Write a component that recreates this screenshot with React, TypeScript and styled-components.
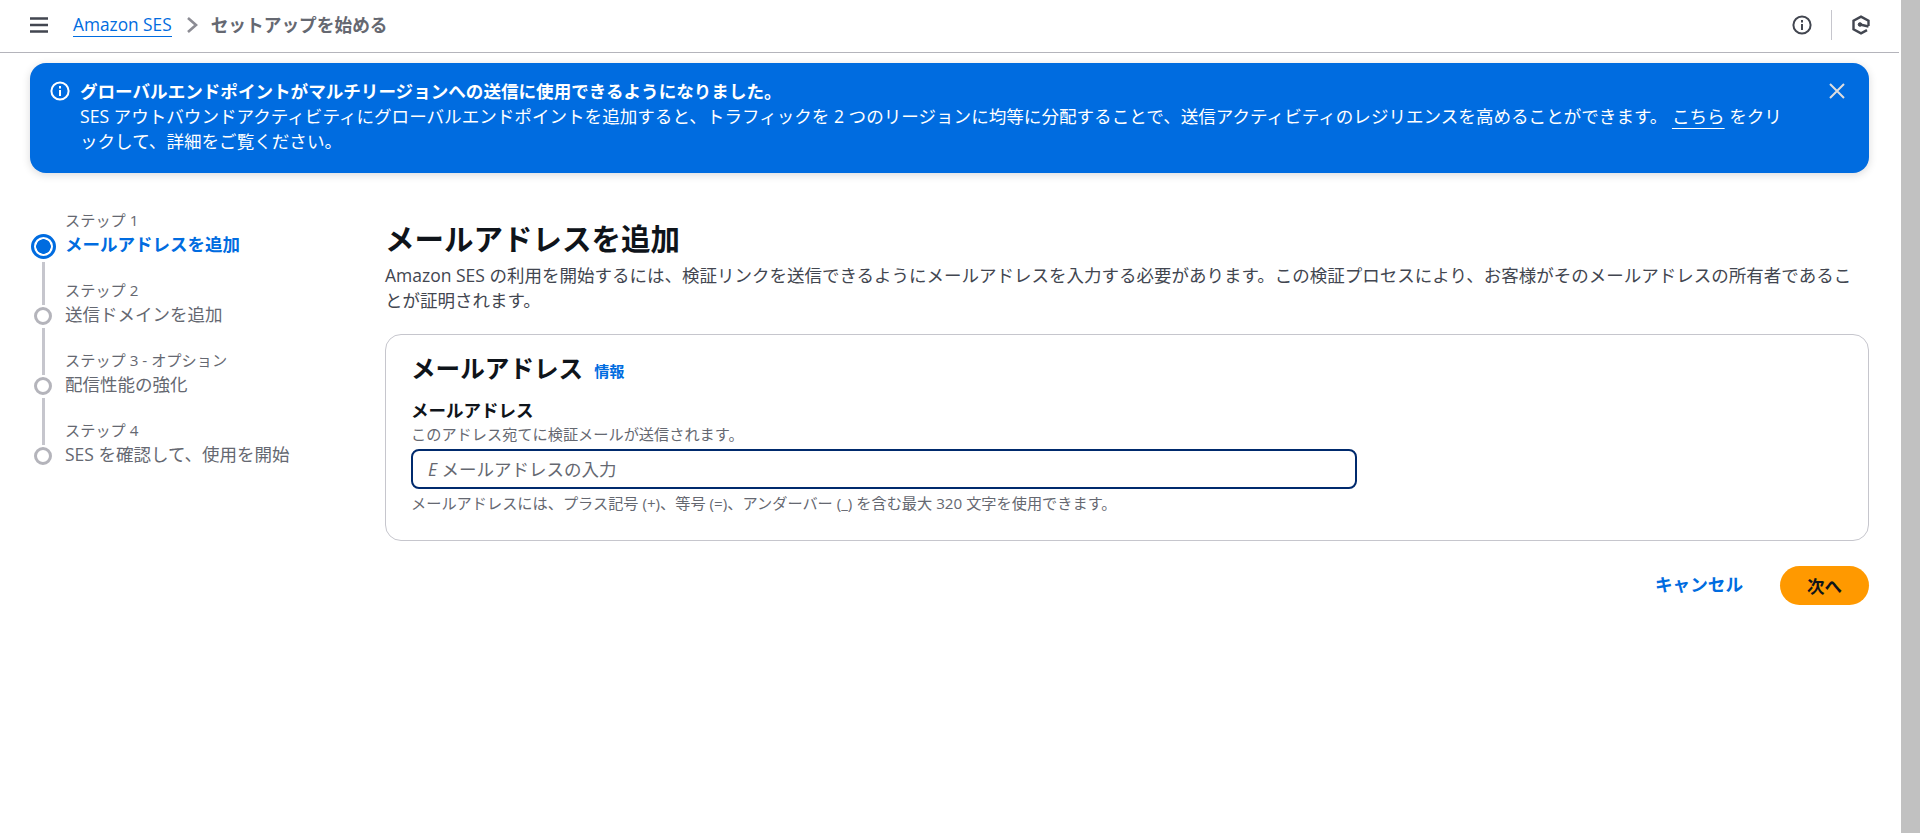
import styled, { createGlobalStyle } from "styled-components";

const GlobalStyle = createGlobalStyle`
  html, body {
    margin: 0;
    padding: 0;
    background: #ffffff;
  }
  body {
    font-family: "Open Sans", "Noto Sans CJK JP", sans-serif;
    font-size: 15.2px;
    line-height: 20px;
    color: #0f141a;
    overflow: hidden;
  }
  * { box-sizing: border-box; }
`;

const steps = [
  { label: "ステップ 1", title: "メールアドレスを追加", active: true },
  { label: "ステップ 2", title: "送信ドメインを追加", active: false },
  { label: "ステップ 3 - オプション", title: "配信性能の強化", active: false },
  { label: "ステップ 4", title: "SES を確認して、使用を開始", active: false },
];

const App = () => {
  return (
    <Shell>
      <GlobalStyle />
      <Page>
        <TopBar>
          <TopLeft>
            <MenuButton>
              <svg width="20" height="16" viewBox="0 0 20 16" fill="none" stroke="#424650" strokeWidth="2.4">
                <path d="M0 1.5h18M0 8h18M0 14.5h18" />
              </svg>
            </MenuButton>
            <Crumb>Amazon SES</Crumb>
            <svg width="14" height="18" viewBox="0 0 14 18" fill="none" stroke="#8c8c94" strokeWidth="2.6">
              <path d="M2 2l8 7-8 7" />
            </svg>
            <CurrentCrumb>セットアップを始める</CurrentCrumb>
          </TopLeft>
          <TopRight>
            <svg width="20" height="20" viewBox="0 0 20 20" fill="none" stroke="#424650" strokeWidth="2">
              <circle cx="10" cy="10" r="8.6" />
              <path d="M10 9v6" />
              <path d="M10 5v2.4" />
            </svg>
            <BarDivider />
            <svg width="20" height="20" viewBox="0 0 20 20" fill="none" stroke="#424650" strokeWidth="2.4">
              <path d="M17.5 11V5.7L10 1.6 2.5 5.7v8.6l7.5 4.1 6-3.3" />
              <circle cx="9" cy="9.5" r="1.8" fill="#424650" strokeWidth="1" />
              <path d="M9 9.5l8.5 2" />
            </svg>
          </TopRight>
        </TopBar>
        <Banner>
          <BannerIcon>
            <svg width="20" height="20" viewBox="0 0 20 20" fill="none" stroke="#ffffff" strokeWidth="2">
              <circle cx="10" cy="10" r="8.6" />
              <path d="M10 9v6" />
              <path d="M10 5v2.4" />
            </svg>
          </BannerIcon>
          <BannerBody>
            <BannerTitle>グローバルエンドポイントがマルチリージョンへの送信に使用できるようになりました。</BannerTitle>
            <div>
              SES アウトバウンドアクティビティにグローバルエンドポイントを追加すると、トラフィックを 2 つのリージョンに均等に分配することで、送信アクティビティのレジリエンスを高めることができます。 <BannerLink>こちら</BannerLink> をクリックして、詳細をご覧ください。
            </div>
          </BannerBody>
          <CloseIcon>
            <svg width="18" height="18" viewBox="0 0 18 18" fill="none" stroke="#dddddf" strokeWidth="2">
              <path d="M2 2l14 14M16 2L2 16" />
            </svg>
          </CloseIcon>
        </Banner>
        <Content>
          <StepNav>
            {steps.map((step, i) => (
              <StepItem key={step.label}>
                <StepLabel>{step.label}</StepLabel>
                <StepRow>
                  <StepMarker>
                    {step.active ? <ActiveDot /> : <IdleDot />}
                  </StepMarker>
                  <StepTitle $active={step.active}>{step.title}</StepTitle>
                </StepRow>
                {i < steps.length - 1 && <StepLine $active={step.active} />}
              </StepItem>
            ))}
          </StepNav>
          <Main>
            <PageTitle>メールアドレスを追加</PageTitle>
            <PageDescription>
              Amazon SES の利用を開始するには、検証リンクを送信できるようにメールアドレスを入力する必要があります。この検証プロセスにより、お客様がそのメールアドレスの所有者であることが証明されます。
            </PageDescription>
            <Card>
              <CardHeader>
                <CardTitle>メールアドレス</CardTitle>
                <InfoLink>情報</InfoLink>
              </CardHeader>
              <FieldLabel>メールアドレス</FieldLabel>
              <FieldHint>このアドレス宛てに検証メールが送信されます。</FieldHint>
              <EmailInput placeholder="E メールアドレスの入力" />
              <FieldHint>メールアドレスには、プラス記号 (+)、等号 (=)、アンダーバー (_) を含む最大 320 文字を使用できます。</FieldHint>
            </Card>
            <Actions>
              <CancelButton>キャンセル</CancelButton>
              <NextButton>次へ</NextButton>
            </Actions>
          </Main>
        </Content>
      </Page>
      <Scrollbar />
    </Shell>
  );
};

export default App;

const Shell = styled.div`
  display: flex;
  height: 833px;
  overflow: hidden;
`;

const Page = styled.div`
  flex: 1;
  min-width: 0;
`;

const Scrollbar = styled.div`
  width: 19px;
  margin-left: 2px;
  background-color: #c1c1c1;
`;

const TopBar = styled.header`
  height: 53px;
  padding: 0 28px 2px 30px;
  display: flex;
  align-items: center;
  justify-content: space-between;
  border-bottom: 1px solid #b4b4bb;
`;

const TopLeft = styled.div`
  display: flex;
  align-items: center;
`;

const MenuButton = styled.div`
  display: flex;
  width: 43px;
`;

const Crumb = styled.a`
  font-size: 17.3px;
  color: #006ce0;
  line-height: 23px;
  border-bottom: 1px solid #006ce0;
  margin-right: 14px;
`;

const CurrentCrumb = styled.span`
  font-size: 17.7px;
  font-weight: 700;
  color: #656871;
  margin-left: 11px;
`;

const TopRight = styled.div`
  display: flex;
  align-items: center;
`;

const BarDivider = styled.div`
  width: 1px;
  height: 30px;
  background-color: #c6c6cd;
  margin: 0 19px;
`;

const Banner = styled.section`
  margin: 10px 30px 0;
  height: 110px;
  padding: 16px 20px;
  display: flex;
  color: #ffffff;
  background-color: #006ce0;
  border-radius: 16px;
  box-shadow: 0 2px 8px rgba(0, 7, 22, 0.15);
`;

const BannerIcon = styled.div`
  display: flex;
  margin-top: 2px;
  margin-right: 10px;
  height: 20px;
`;

const BannerBody = styled.div`
  flex: 1;
  font-size: 17.57px;
  line-height: 25px;
  padding-right: 35px;
`;

const BannerTitle = styled.div`
  font-weight: 700;
`;

const BannerLink = styled.a`
  text-decoration: underline;
  text-underline-offset: 5px;
`;

const CloseIcon = styled.div`
  display: flex;
  margin: 3px 3px 0 0;
  height: 18px;
`;

const Content = styled.div`
  display: flex;
  padding: 36px 30px 0;
`;

const StepNav = styled.nav`
  width: 355px;
  flex-shrink: 0;
`;

const StepItem = styled.div`
  position: relative;
  height: 70px;
`;

const StepLabel = styled.div`
  font-size: 15.2px;
  line-height: 20px;
  color: #656871;
  padding: 1px 0 0 35px;
`;

const StepRow = styled.div`
  display: flex;
  align-items: center;
  height: 26px;
  margin-top: 3px;
`;

const StepMarker = styled.div`
  display: flex;
  justify-content: center;
  width: 26px;
  margin-right: 9px;
`;

const ActiveDot = styled.div`
  width: 25px;
  height: 25px;
  border-radius: 50%;
  border: 3px solid #006ce0;
  background: radial-gradient(circle, #006ce0 0 7px, #ffffff 7.5px);
`;

const IdleDot = styled.div`
  width: 18px;
  height: 18px;
  border-radius: 50%;
  border: 3px solid #b4b4bb;
  background: #ffffff;
`;

const StepTitle = styled.div<{ $active: boolean }>`
  font-size: 17.5px;
  line-height: 22px;
  margin-bottom: 4px;
  font-weight: ${(props) => (props.$active ? 700 : 400)};
  color: ${(props) => (props.$active ? "#006ce0" : "#656871")};
`;

const StepLine = styled.div<{ $active: boolean }>`
  position: absolute;
  left: 12px;
  top: ${(props) => (props.$active ? "53px" : "49px")};
  bottom: -26px;
  width: 3px;
  background-color: #c6c6cd;
`;

const Main = styled.main`
  flex: 1;
  min-width: 0;
  padding-top: 12px;
`;

const PageTitle = styled.h1`
  margin: 0;
  font-size: 29.5px;
  line-height: 36px;
  font-weight: 700;
  color: #0f141a;
`;

const PageDescription = styled.p`
  margin: 6px 10px 0 0;
  font-size: 17.5px;
  line-height: 25px;
  color: #424650;
`;

const Card = styled.section`
  margin-top: 21px;
  height: 207px;
  padding: 16px 25px;
  border: 1px solid #c6c6cd;
  border-radius: 16px;
`;

const CardHeader = styled.div`
  display: flex;
  align-items: center;
  height: 36px;
`;

const CardTitle = styled.h2`
  margin: 0;
  font-size: 24.6px;
  line-height: 30px;
  font-weight: 700;
`;

const InfoLink = styled.a`
  font-size: 15.2px;
  font-weight: 700;
  color: #006ce0;
  margin: 3px 0 0 11px;
`;

const FieldLabel = styled.div`
  margin-top: 11px;
  font-size: 17.5px;
  line-height: 25px;
  font-weight: 700;
`;

const FieldHint = styled.div`
  font-size: 15.2px;
  line-height: 18px;
  color: #656871;
  margin-top: 2px;
`;

const EmailInput = styled.input`
  display: block;
  width: 946px;
  height: 40px;
  margin: 6px 0 5px;
  padding: 0 15px;
  border: 2px solid #002a6d;
  border-radius: 8px;
  outline: none;
  font-family: inherit;
  font-size: 17.5px;
  font-synthesis: none;

  &::placeholder {
    color: #656871;
    font-style: italic;
    opacity: 1;
  }
`;

const Actions = styled.div`
  display: flex;
  justify-content: flex-end;
  align-items: center;
  margin-top: 25px;
`;

const CancelButton = styled.a`
  font-size: 17.6px;
  font-weight: 700;
  color: #006ce0;
  margin: 0 37px 4px 0;
`;

const NextButton = styled.button`
  width: 89px;
  height: 39px;
  border: none;
  border-radius: 20px;
  background-color: #ff9900;
  font-family: inherit;
  font-size: 17.5px;
  font-weight: 700;
  color: #0f141a;
`;
